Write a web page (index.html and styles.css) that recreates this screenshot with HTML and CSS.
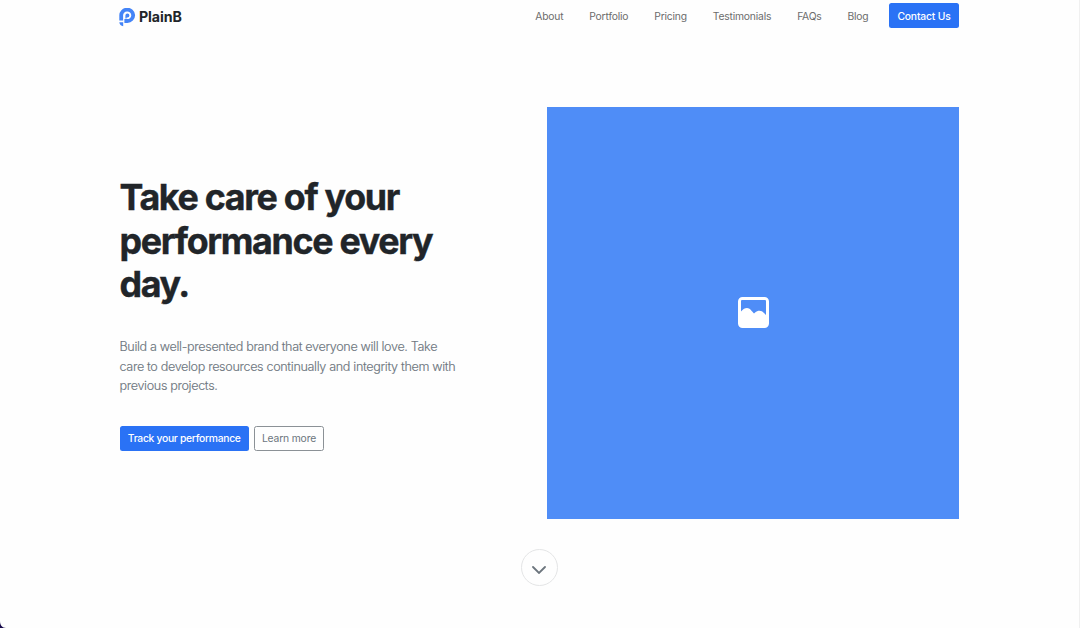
FILE: index.html
```html
<!DOCTYPE html>
<html lang="en">
<head>
<meta charset="utf-8">
<title>PlainB</title>
<link rel="stylesheet" href="styles.css">
</head>
<body>
<div class="page">
  <header class="header">
    <a class="brand">
      <svg class="brand-mark" viewBox="0 0 17 19">
        <path class="mark-ring" d="M2.2 12.6V7.6A6 5.7 0 1 1 8.3 13H5.4"/>
        <path class="mark-blue" d="M6.4 10.6V7.6A2 2 0 1 1 8.4 9.6H7.6V10.6Z"/>
        <path class="mark-blue" d="M0.3 14.2H4.2V18.2C2 18 0.5 16.4 0.3 14.2Z"/>
      </svg>
      <span>PlainB</span>
    </a>
    <nav class="nav">
      <a>About</a><a>Portfolio</a><a>Pricing</a><a>Testimonials</a><a>FAQs</a><a>Blog</a>
    </nav>
    <a class="btn btn-primary btn-contact">Contact Us</a>
  </header>
  <main class="hero">
    <section class="copy">
      <h1>Take care of your<br>performance every<br>day.</h1>
      <p>Build a well-presented brand that everyone will love. Take<br>care to develop resources continually and integrity them with<br>previous projects.</p>
      <div class="actions">
        <a class="btn btn-primary btn-track">Track your performance</a>
        <a class="btn btn-outline">Learn more</a>
      </div>
    </section>
    <div class="picture">
      <svg class="picture-icon" viewBox="0 0 31 31">
        <path fill-rule="evenodd" d="M4.5 0H26.5A4.5 4.5 0 0 1 31 4.5V26.5A4.5 4.5 0 0 1 26.5 31H4.5A4.5 4.5 0 0 1 0 26.5V4.5A4.5 4.5 0 0 1 4.5 0ZM4 3Q3 3 3 4V14.5C5 12 7 11 9 11C12 11 13.5 14 16 16.5C18.5 14.2 20 13.8 21.5 13.8C24 13.8 26 15.5 28 18V4Q28 3 27 3Z"/>
      </svg>
    </div>
  </main>
  <a class="scroll-down">
    <svg viewBox="0 0 14 8"><path d="M1 1L7 7L13 1"/></svg>
  </a>
  <svg class="corner" viewBox="0 0 6 7"><path d="M0 0C0 4 2 7 6 7H0Z"/></svg>
</div>
</body>
</html>
```
FILE: styles.css
```css
* { box-sizing: border-box; }
body {
  margin: 0;
  font-family: Inter, "Liberation Sans", sans-serif;
  background: #fefefe;
  color: #212529;
}
.page {
  position: relative;
  height: 628px;
  overflow: hidden;
  padding: 0 120px;
  border-right: 1px solid #f0f0f0;
}
.header {
  display: flex;
  align-items: center;
  width: 840px;
  height: 32px;
}
.brand {
  display: flex;
  align-items: center;
  gap: 3px;
  margin: 2px auto 0 -1px;
  font-size: 14.2px;
  font-weight: 700;
  letter-spacing: -0.1px;
}
.brand span { margin-top: -1px; }
.brand-mark { width: 17px; height: 19px; }
.mark-blue { fill: #4484f7; }
.mark-ring { fill: none; stroke: #4484f7; stroke-width: 3.8; }
.nav {
  display: flex;
  gap: 25.9px;
  margin-right: 20.5px;
  font-size: 10.3px;
  letter-spacing: -0.18px;
  color: #6c6c6c;
}
.btn {
  display: flex;
  align-items: center;
  justify-content: center;
  height: 25px;
  padding-bottom: 1px;
  border-radius: 2.5px;
  font-size: 10.3px;
  white-space: nowrap;
  letter-spacing: -0.15px;
}
.btn-primary { background: #2a72f5; color: #fff; font-weight: 500; }
.btn-contact { width: 70px; height: 25px; padding-bottom: 0; margin: -1px 1px 0 0; }
.btn-track { width: 129.5px; letter-spacing: -0.28px; }
.btn-outline { width: 70px; border: 1px solid #8b9196; color: #6c757d; }
.hero {
  display: flex;
  justify-content: space-between;
  width: 839px;
  margin-top: 75px;
}
.copy { padding-top: 69px; margin-left: -0.5px; white-space: nowrap; }
h1 {
  margin: 0;
  font-size: 35.8px;
  line-height: 43.6px;
  font-weight: 700;
  letter-spacing: -1.36px;
  word-spacing: 0.2px;
  -webkit-text-stroke: 0.4px #212529;
}
p {
  margin: 30.5px 0 30.5px;
  font-size: 12.6px;
  line-height: 19.4px;
  font-weight: 300;
  letter-spacing: -0.34px;
  color: #6c757d;
  -webkit-text-stroke: 0.15px #6c757d;
}
.actions { display: flex; gap: 5px; }
.picture {
  display: flex;
  align-items: center;
  justify-content: center;
  width: 412px;
  height: 412px;
  padding-bottom: 1px;
  background: #4f8df7;
}
.picture-icon { width: 31px; height: 31px; fill: #fff; }
.scroll-down {
  display: flex;
  align-items: center;
  justify-content: center;
  width: 37px;
  height: 37px;
  margin: 30px 0 0 401px;
  padding: 4px 1px 0 0;
  border: 1px solid #e4e5e6;
  border-radius: 50%;
}
.scroll-down svg {
  width: 14px;
  height: 8px;
  fill: none;
  stroke: #6c757d;
  stroke-width: 1.8;
  stroke-linecap: round;
}
.corner {
  position: absolute;
  left: 0;
  bottom: 0;
  width: 6px;
  height: 7px;
  fill: #160a4a;
}
```
